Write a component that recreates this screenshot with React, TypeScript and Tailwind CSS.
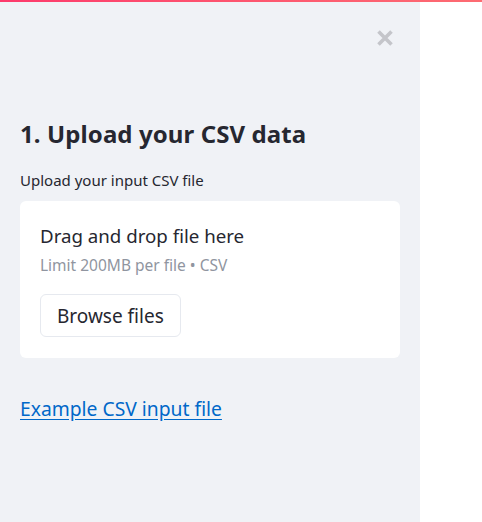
export default function App() {
  return (
    <div className="relative flex h-[522px] w-[482px] overflow-hidden bg-white font-['Noto_Sans',sans-serif] text-[#262730]">
      <div className="absolute inset-x-0 top-0 h-[2px] bg-gradient-to-r from-[#fd3a6c] to-[#fd6b72]" />
      <aside className="flex h-full w-[420px] flex-col bg-[#f0f2f6] px-5 pt-[26px]">
        <div className="flex justify-end pr-[6px]">
          <svg width="18" height="18" viewBox="0 0 18 18" className="mt-[3px]">
            <path d="M2.5 2.5L15.5 15.5M15.5 2.5L2.5 15.5" stroke="#c4c5ca" strokeWidth="3.6" strokeLinecap="butt" />
          </svg>
        </div>
        <h2 className="mt-[72px] text-[24px] font-bold leading-[30px] tracking-[0.1px]">
          1. Upload your CSV data
        </h2>
        <p className="mt-[21px] text-[15px] leading-5">Upload your input CSV file</p>
        <div className="mt-[11px] flex flex-col items-start rounded-md bg-white px-5 pb-[21px] pt-[23px]">
          <p className="text-[18.7px] leading-6">Drag and drop file here</p>
          <p className="mt-[7px] text-[15.5px] leading-5 text-[#9095a0]">Limit 200MB per file • CSV</p>
          <button
            type="button"
            className="mt-[19px] h-[43px] rounded-md border border-[#e6e9ef] bg-white px-4 text-[19px] leading-6"
          >
            Browse files
          </button>
        </div>
        <a href="#" className="mt-[39px] self-start text-[19.3px] leading-6 text-[#0068c9] underline underline-offset-[3px]">
          Example CSV input file
        </a>
      </aside>
    </div>
  );
}
